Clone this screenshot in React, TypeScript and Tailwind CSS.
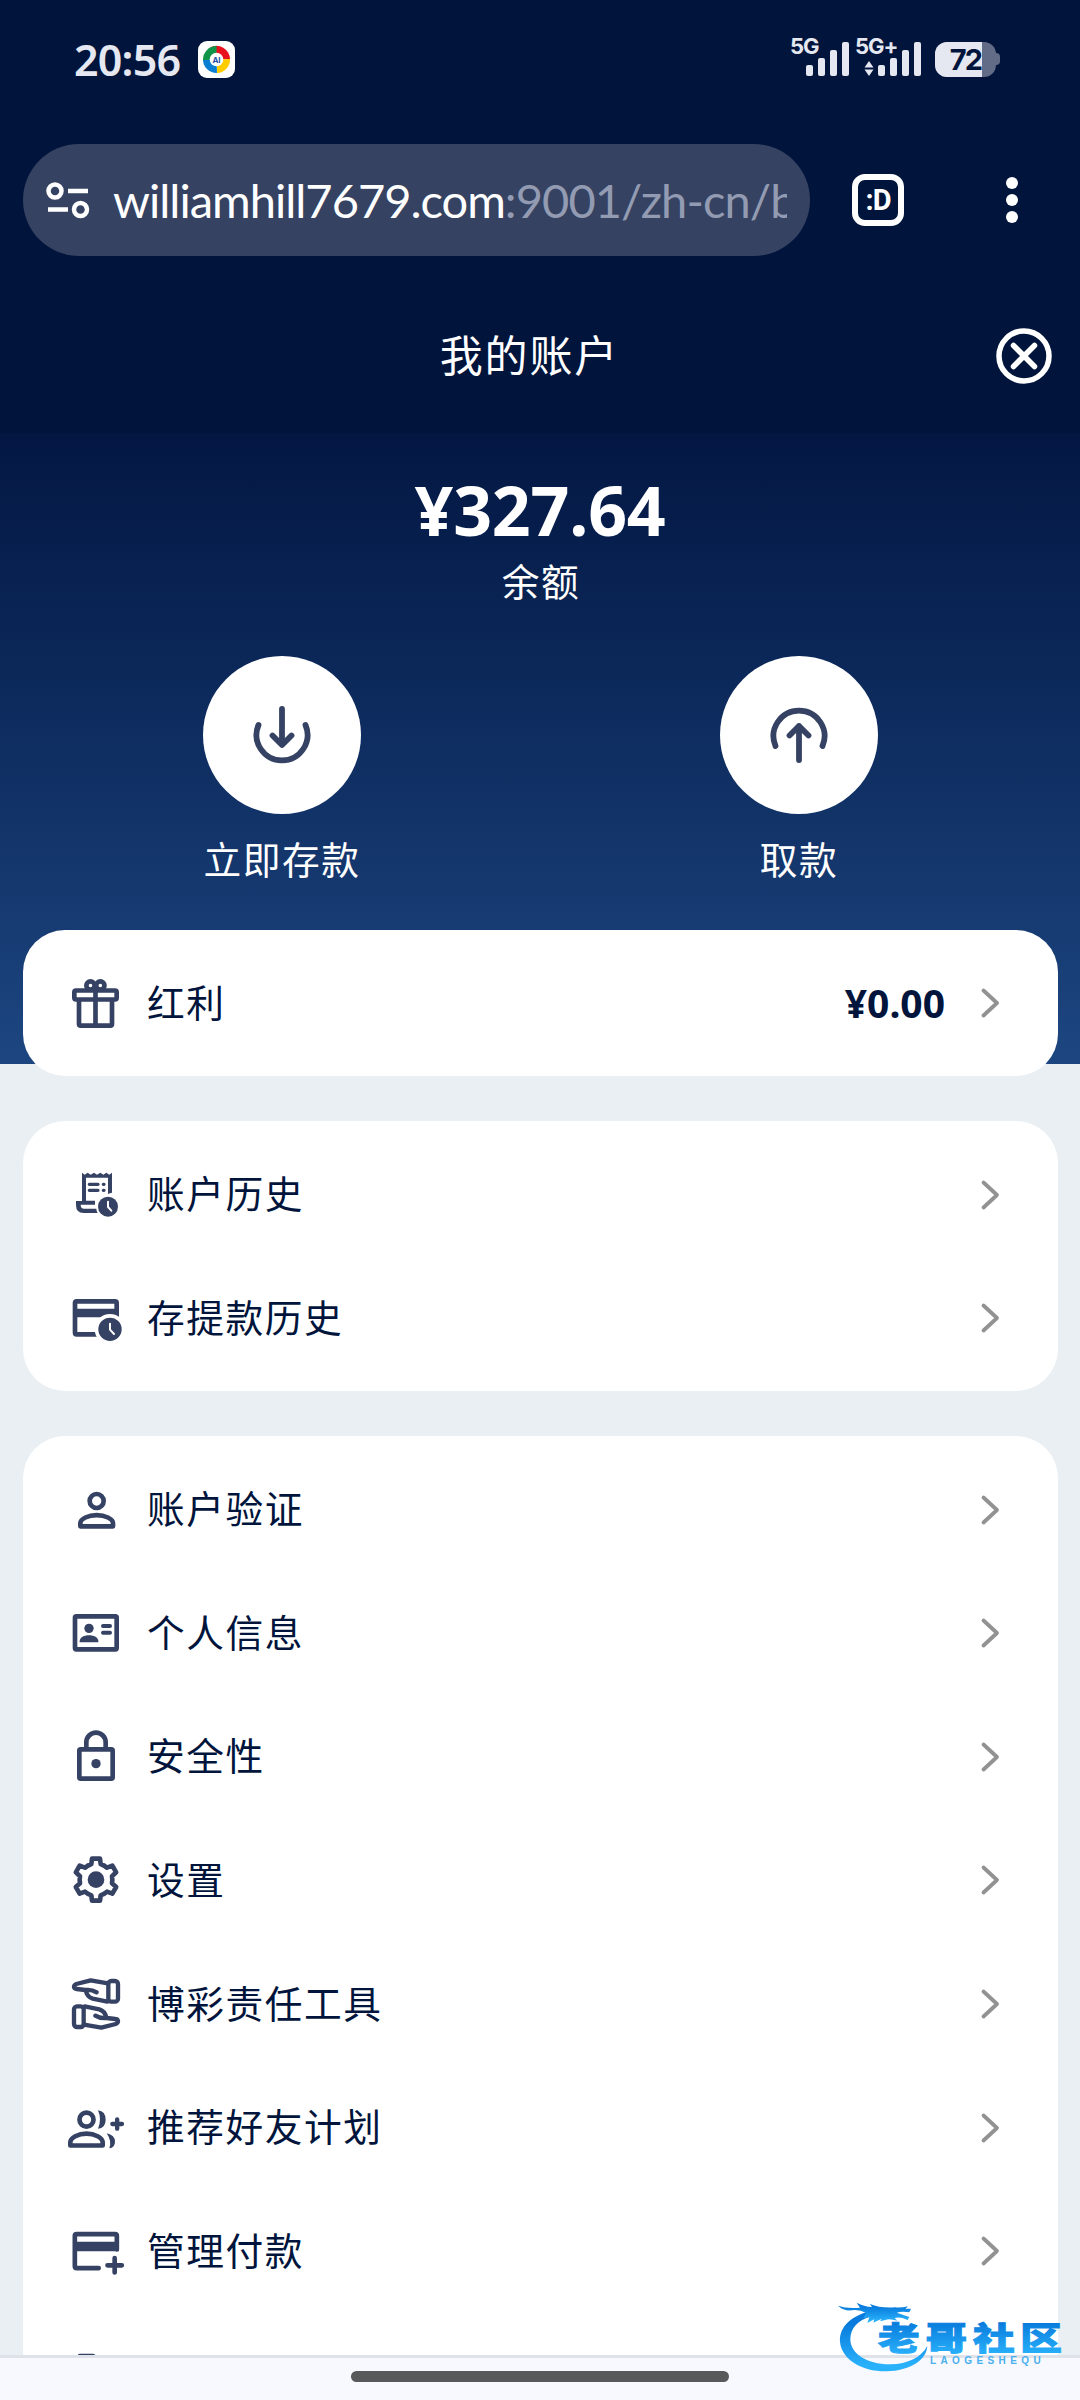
import type { ReactNode } from "react";

const ink = "#354263";

const RowIcon = ({ top, children }: { top: number; children: ReactNode }) => (
  <svg
    className="size-[60px] shrink-0"
    viewBox={`198 ${top} 180 180`}
    fill="none"
    stroke={ink}
    strokeWidth="14"
    strokeLinecap="round"
    strokeLinejoin="round"
  >
    {children}
  </svg>
);

const GiftIcon = () => (
  <RowIcon top={219}>
    <circle cx="271.5" cy="256.5" r="12.500" />
    <circle cx="301" cy="256.5" r="12.500" />
    <rect x="223" y="271.5" width="127" height="27" rx="5" />
    <path d="M237 301v71q0 5 5 5h89q5 0 5-5v-71M286.500 268v106" />
  </RowIcon>
);

const ReceiptIcon = () => (
  <RowIcon top={793}>
    <path
      fill={ink}
      stroke="none"
      d="M246 816l8 6 9-6 9 6 10-6 9 6 10-6 9 6 9-6 9 6 8-6v60q-6 1-12 4v-49h-66v69h27v12h-43q0 12 10 12h37q0 6 4 13h-42q-23 0-23-24v-12h18z"
    />
    <path strokeWidth="10" d="M268 851h26M268 869h26M310 851h2M310 869h2" />
    <circle cx="324" cy="918" r="30" fill={ink} stroke="none" />
    <path d="M324 903v16l10 11" stroke="#fff" strokeWidth="6" />
  </RowIcon>
);

const CardClockIcon = () => (
  <RowIcon top={1164}>
    <rect x="225" y="1204" width="125" height="99" rx="5" />
    <path d="M224 1226h127v26h-127z" fill={ink} stroke="none" />
    <circle cx="330" cy="1288" r="46" fill="#fff" stroke="none" />
    <circle cx="330" cy="1288" r="35" fill={ink} stroke="none" />
    <path d="M330 1271v18l12 13" stroke="#fff" strokeWidth="6" />
  </RowIcon>
);

const PersonIcon = () => (
  <RowIcon top={178}>
    <circle cx="290" cy="241" r="21" />
    <path d="M241 317V308c0-14 24-24.500 49-24.500s49 10.500 49 24.500v9z" />
  </RowIcon>
);

const IdIcon = () => (
  <RowIcon top={549}>
    <rect x="225" y="589" width="125" height="99" rx="4" />
    <circle cx="267" cy="625" r="14" fill={ink} stroke="none" />
    <path
      d="M239 667v-3c0-12 14-18 28-18s28 6 28 18v3z"
      fill={ink}
      stroke="none"
    />
    <path strokeWidth="12" d="M309 618h21M309 638.500h21" />
  </RowIcon>
);

const LockIcon = () => (
  <RowIcon top={920}>
    <rect x="238" y="987" width="100" height="88" rx="4" />
    <path d="M259 984v-18a29 29 0 0 1 58 0v18" />
    <circle cx="288" cy="1030" r="14" fill={ink} stroke="none" />
  </RowIcon>
);

const GearIcon = () => (
  <RowIcon top={1291}>
    <g transform="translate(288 1380)">
      <circle r="25" fill={ink} stroke="none" />
      <path d="M-14-47L-12-63H12L14-47Q25-43 33-36L49-42 60.500-22 48-10.500Q50 0 48 10.500L60.500 22 49 42 33 36Q25 43 14 47L12 63H-12L-14 47Q-25 43-33 36L-49 42-60.500 22-48 10.500Q-50 0-48-10.500L-60.500-22-49-42-33-36Q-25-43-14-47z" />
    </g>
  </RowIcon>
);

const handPath =
  "M324 190L272 181L229 192Q222 195 222 201Q223 207 230 207L256 210Q276 208 290 217M257 211Q261 231 278 236L322 245";

const HandsIcon = () => (
  <RowIcon top={162}>
    <g strokeWidth="13">
      <path d={handPath} />
      <rect x="325" y="183" width="29" height="62" rx="9" />
    </g>
    <g strokeWidth="13" transform="rotate(180 288 252)">
      <path d={handPath} />
      <rect x="325" y="183" width="29" height="62" rx="9" />
    </g>
  </RowIcon>
);

const ReferIcon = () => (
  <RowIcon top={533}>
    <circle cx="259.500" cy="598" r="21" />
    <path d="M211 675.500V666c0-14 24-26 48.500-26s48.500 12 48.500 26v9.500z" />
    <path
      fill={ink}
      stroke="none"
      d="M294 570q23 3 23 28t-23 27q12-28 0-55zM320 639q25 6 25 25 0 17-17 20 8-22-8-45z"
    />
    <path strokeWidth="13" d="M337 611h29M351.500 597v28" />
  </RowIcon>
);

const CardPlusIcon = () => (
  <RowIcon top={904}>
    <path d="M296 1045.500h-66q-5.500 0-5.500-5.500v-91q0-5.500 5.500-5.500h115q5.500 0 5.500 5.500v40" />
    <path d="M224 966h133v29h-133z" fill={ink} stroke="none" />
    <path d="M322.500 1037h43M344 1015.500v43" />
  </RowIcon>
);

const NextIcon = () => (
  <RowIcon top={1275}>
    <path d="M240 1308h39l50 50v70h-89z" />
  </RowIcon>
);

const Chevron = () => (
  <svg
    className="h-[32px] w-[20px]"
    viewBox="0 0 20 32"
    fill="none"
    stroke="#929292"
    strokeWidth="3.800"
    strokeLinecap="round"
    strokeLinejoin="round"
  >
    <path d="M3.500 3.500L17 16 3.500 28.500" />
  </svg>
);

const Row = ({
  icon,
  label,
  value,
}: {
  icon: ReactNode;
  label: string;
  value?: string;
}) => (
  <div className="flex h-[123.6px] items-center pr-[58px] pl-[43px]">
    {icon}
    <span className="ml-[21px] text-[37.700px] tracking-[1.550px] text-[#00143c]">
      {label}
    </span>
    <span className="mr-[35px] ml-auto text-[39px] font-bold text-[#00143c]">
      {value}
    </span>
    <Chevron />
  </div>
);

const Card = ({ children }: { children: ReactNode }) => (
  <section className="mr-[22px] mb-[45px] ml-[23px] rounded-[42px] bg-white py-[11.400px]">
    {children}
  </section>
);

const Signal = () => (
  <div className="flex h-[34px] items-end gap-[5px]">
    <i className="h-[11px] w-[7px] rounded-[2px] bg-[#e5e8f0]"></i>
    <i className="h-[18px] w-[7px] rounded-[2px] bg-[#e5e8f0]"></i>
    <i className="h-[26px] w-[7px] rounded-[2px] bg-[#e5e8f0]"></i>
    <i className="h-[34px] w-[7px] rounded-[2px] bg-[#e5e8f0]"></i>
  </div>
);

const StatusBar = () => (
  <div className="flex h-[118px] items-center pr-[80px] pl-[74px] font-['Inter'] text-[#e5e8f0]">
    <span className="w-[124px] font-['Noto_Sans'] text-[43px] leading-none font-semibold tracking-[-0.800px]">
      20:56
    </span>
    <svg className="h-[37px] w-[37px]" viewBox="0 0 37 37">
      <rect width="37" height="37" rx="9" fill="#fff" />
      <path d="M18.500 18.500L12 6.500A13.500 13.500 0 0 1 32 18z" fill="#e8121f" />
      <path d="M18.500 18.500L32 18A13.500 13.500 0 0 1 19 32z" fill="#fc0" />
      <path d="M18.500 18.500L19 32A13.500 13.500 0 0 1 5 18z" fill="#0a7ed0" />
      <path d="M18.500 18.500L5 19A13.500 13.500 0 0 1 18.500 5z" fill="#109548" />
      <circle cx="18.500" cy="18.500" r="6.800" fill="#fff" />
      <text
        x="18.500"
        y="21.500"
        textAnchor="middle"
        fontSize="8"
        fontWeight="700"
        fill="#2450a8"
      >
        AI
      </text>
    </svg>
    <div className="relative ml-auto">
      <span className="absolute -top-[7px] -left-[16px] text-[22px] leading-none font-bold tracking-[-1px]">
        5G
      </span>
      <Signal />
    </div>
    <div className="relative ml-[29px]">
      <span className="absolute -top-[7px] -left-[23px] text-[22px] leading-none font-bold tracking-[-1px]">
        5G+
      </span>
      <svg
        className="absolute bottom-0 -left-[14px] h-[15px] w-[10px]"
        viewBox="0 0 10 15"
        fill="#e5e8f0"
      >
        <path d="M5 0l4.500 6.500h-9zM5 15l4.500-6.500h-9z" />
      </svg>
      <Signal />
    </div>
    <div className="ml-[14px] flex items-center">
      <div className="flex h-[35px] w-[61px] overflow-hidden rounded-[12px] bg-[#626c87]">
        <span className="w-[47px] bg-[#e5e8f0] pr-[1px] text-right text-[29px] leading-[35px] font-bold tracking-[-2px] text-[#00143c]">
          72
        </span>
      </div>
      <i className="h-[12px] w-[4px] rounded-r-[4px] bg-[#626c87]"></i>
    </div>
  </div>
);

const AddressBar = () => (
  <div className="flex h-[164px] items-center pl-[23px]">
    <div className="flex h-[112px] w-[787px] items-center rounded-full bg-[#354262] pr-[23px] pl-[23px]">
      <svg
        className="h-[40px] w-[44px] shrink-0"
        viewBox="0 0 44 40"
        fill="none"
        stroke="#fff"
        strokeWidth="4.500"
      >
        <circle cx="9" cy="11" r="6.500" />
        <path d="M22 11h20M2 29.500h20" />
        <circle cx="34.500" cy="29.500" r="6.500" />
      </svg>
      <div className="ml-[23px] flex-1 overflow-hidden font-['Lato'] text-[47px] leading-[60px] tracking-[-1px] whitespace-nowrap text-white">
        williamhill7679.com
        <span className="tracking-[-0.900px] text-[#929bb1]">
          :9001/zh-cn/b
        </span>
      </div>
    </div>
    <div className="ml-[42px] flex h-[52px] w-[52px] items-center justify-center rounded-[13px] border-[6px] border-white font-['Roboto'] text-[29px] leading-none font-bold tracking-[-1px] text-white">
      :D
    </div>
    <div className="ml-[102px] flex flex-col gap-[5px]">
      <i className="size-[12px] rounded-full bg-white"></i>
      <i className="size-[12px] rounded-full bg-white"></i>
      <i className="size-[12px] rounded-full bg-white"></i>
    </div>
  </div>
);

const RoundAction = ({ label, path }: { label: string; path: string }) => (
  <div className="flex w-[240px] flex-col items-center">
    <button
      className="flex size-[158px] items-center justify-center rounded-full bg-white"
      type="button"
      title={label}
    >
      <svg
        className="size-[58px]"
        viewBox="0 0 58 58"
        fill="none"
        stroke={ink}
        strokeWidth="5.800"
        strokeLinecap="round"
        strokeLinejoin="round"
      >
        <path d={path} />
      </svg>
    </button>
    <span className="mt-[19px] text-[37.700px] leading-[54px] tracking-[1.550px]">
      {label}
    </span>
  </div>
);

const Watermark = () => (
  <svg
    className="absolute right-[10px] bottom-[15px] h-[87px] w-[237px]"
    viewBox="159 234 711 261"
  >
    <defs>
      <linearGradient id="wm" x1="0" y1="0" x2="0" y2="1">
        <stop offset="0.200" stopColor="#087bdc" />
        <stop offset="0.900" stopColor="#29b1fb" />
      </linearGradient>
    </defs>
    <g fill="url(#wm)">
      <path d="M264 275C205 292 178 325 180 365C184 417 245 455 320 454C390 452 440 420 442 378C424 412 384 432 332 433C260 434 211 400 211 358C211 326 232 301 274 289Z" />
      <path d="M174 257Q200 267 240 263L230 248Q252 260 276 261L270 252Q300 265 345 262Q364 264 384 259L376 266L393 266L388 277Q366 273 350 278L388 291L383 300Q360 290 344 294L352 302Q326 294 316 300L300 304L305 296L280 308L283 298L262 309L268 292L250 294L258 279Q240 268 215 271Q190 273 174 257Z" />
      <text
        transform="translate(294 390) scale(1.3 1)"
        fontSize="96"
        fontWeight="900"
        fontFamily="Noto Sans CJK SC, sans-serif"
        letterSpacing="13.500"
        stroke="url(#wm)"
        strokeWidth="3"
      >
        老哥社区
      </text>
    </g>
    <text
      x="450"
      y="432"
      textLength="332"
      fontSize="30"
      fontWeight="700"
      fontFamily="Liberation Sans, sans-serif"
      fill="#4bb0ee"
    >
      LAOGESHEQU
    </text>
  </svg>
);

const App = () => {
  return (
    <div className="relative flex h-[2400px] w-[1080px] flex-col overflow-hidden bg-[#e9eff2] font-['Noto_Sans','Noto_Sans_CJK_SC',sans-serif]">
      <header className="h-[433px] shrink-0 bg-[#00143c] text-white">
        <StatusBar />
        <AddressBar />
        <div className="flex h-[148px] items-center justify-end pr-[28px]">
          <h1 className="mr-[377px] text-[43px] tracking-[1.800px]">
            我的账户
          </h1>
          <svg
            className="size-[56px]"
            viewBox="0 0 56 56"
            fill="none"
            stroke="#fff"
            strokeWidth="5.500"
            strokeLinecap="round"
          >
            <circle cx="28" cy="28" r="25" />
            <path d="M17.500 17.500l21 21M38.500 17.500l-21 21" />
          </svg>
        </div>
      </header>
      <div className="h-[631px] shrink-0 bg-linear-to-b from-[#041743] to-[#1d4681] text-white">
        <div className="flex flex-col items-center pt-[40px]">
          <span className="text-[68px] leading-[74px] font-bold tracking-[-0.200px]">
            ¥327.64
          </span>
          <span className="mt-[8px] pl-[2px] text-[37.700px] leading-[54px] tracking-[1.550px]">
            余额
          </span>
        </div>
        <div className="mt-[47px] flex justify-between pr-[161px] pl-[162px]">
          <RoundAction
            label="立即存款"
            path="M29 3v35M19.500 29.500l9.500 9.500 9.500-9.500M5.500 19A25.500 25.500 0 1 0 52.500 19"
          />
          <RoundAction
            label="取款"
            path="M29 54V20M19.500 29.500l9.500-9.500 9.500 9.500M5.500 40A25.500 25.500 0 1 1 52.500 40"
          />
        </div>
      </div>
      <main className="-mt-[134px] min-h-0 flex-1 overflow-hidden">
        <Card>
          <Row icon={<GiftIcon />} label="红利" value="¥0.00" />
        </Card>
        <Card>
          <Row icon={<ReceiptIcon />} label="账户历史" />
          <Row icon={<CardClockIcon />} label="存提款历史" />
        </Card>
        <Card>
          <Row icon={<PersonIcon />} label="账户验证" />
          <Row icon={<IdIcon />} label="个人信息" />
          <Row icon={<LockIcon />} label="安全性" />
          <Row icon={<GearIcon />} label="设置" />
          <Row icon={<HandsIcon />} label="博彩责任工具" />
          <Row icon={<ReferIcon />} label="推荐好友计划" />
          <Row icon={<CardPlusIcon />} label="管理付款" />
          <div className="flex h-[123.6px] items-center pl-[43px]">
            <NextIcon />
          </div>
        </Card>
      </main>
      <footer className="flex h-[45px] shrink-0 justify-center border-t-[3px] border-[#dfe2e9] bg-[#f8f9fe] pt-[13px]">
        <i className="h-[11px] w-[378px] rounded-full bg-[#58595b]"></i>
      </footer>
      <Watermark />
    </div>
  );
};

export default App;
